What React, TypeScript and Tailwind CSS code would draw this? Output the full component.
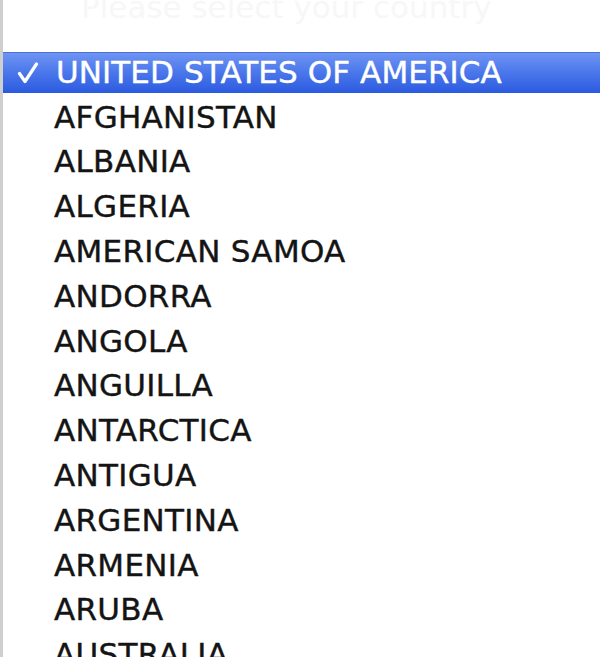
import React from "react";

const countries = [
  "AFGHANISTAN",
  "ALBANIA",
  "ALGERIA",
  "AMERICAN SAMOA",
  "ANDORRA",
  "ANGOLA",
  "ANGUILLA",
  "ANTARCTICA",
  "ANTIGUA",
  "ARGENTINA",
  "ARMENIA",
  "ARUBA",
  "AUSTRALIA",
];

export default function App() {
  return (
    <div
      className="w-[600px] h-[657px] overflow-hidden bg-white border-l-[3px] border-[#cfcfcf] flex flex-col"
      style={{ fontFamily: '"DejaVu Sans", "Liberation Sans", sans-serif' }}
    >
      <div className="h-[49.6px] shrink-0 overflow-hidden pl-[78px]">
        <div className="text-[31px] leading-[14px] text-[#f7f7f7] whitespace-nowrap">
          Please select your country
        </div>
      </div>
      <div className="h-[44.8px] shrink-0 pt-[2.4px] pb-[1.4px]">
        <div className="h-full flex items-center border-t border-[#4b70d4] bg-linear-to-b from-[#6e94f3] via-[#4a76ea] to-[#2b5ae0] text-white">
          <div className="w-[53px] pl-[14px] flex items-center">
            <svg width="22" height="22" viewBox="0 0 22 22" fill="none">
              <path
                d="M2.5 11.5 L8 19.5 L19.5 2"
                stroke="#ffffff"
                strokeWidth="3.2"
                strokeLinecap="round"
                strokeLinejoin="round"
              />
            </svg>
          </div>
          <span className="text-[31px] leading-none tracking-[0.1px] whitespace-nowrap [-webkit-text-stroke:0.4px_#ffffff]">
            UNITED STATES OF AMERICA
          </span>
        </div>
      </div>
      {countries.map((c) => (
        <div
          key={c}
          className="h-[44.8px] shrink-0 flex items-center pl-[51px] text-[31px] tracking-[0.3px] text-[#141414] whitespace-nowrap [-webkit-text-stroke:0.4px_#141414]"
        >
          {c}
        </div>
      ))}
    </div>
  );
}
